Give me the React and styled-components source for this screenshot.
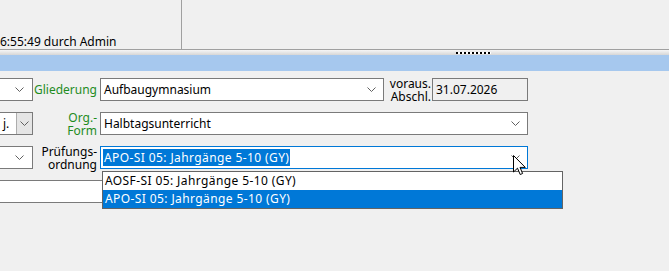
import React from "react";
import styled, { createGlobalStyle } from "styled-components";

const GlobalStyle = createGlobalStyle`
  html, body {
    margin: 0;
    padding: 0;
    background: #f0f0f0;
  }
  body {
    font-family: "Noto Sans", "Open Sans", sans-serif;
    font-size: 12px;
    color: #000;
    overflow: hidden;
  }
`;

const Page = styled.div`
  position: relative;
  width: 669px;
  height: 271px;
  overflow: hidden;
  background: #f0f0f0;
`;

const TopPanel = styled.div`
  display: flex;
  height: 49px;
  border-bottom: 1px solid #a0a0a0;
`;

const StatusCell = styled.div`
  width: 181px;
  border-right: 1px solid #a0a0a0;
  display: flex;
  align-items: flex-end;
  line-height: 15px;
  white-space: nowrap;
  overflow: hidden;
`;

const Splitter = styled.div`
  height: 5px;
  display: flex;
  align-items: center;
  padding-left: 456px;
  background: linear-gradient(#f6f6f6, #d6d6d6);
`;

const Grip = styled.div`
  width: 35px;
  height: 2px;
  margin-top: 1px;
  background: repeating-linear-gradient(
    to right,
    #000 0 2px,
    #fff 2px 4px
  );
`;

const Band = styled.div`
  height: 16px;
  background: #a6c8ee;
`;

const Form = styled.div`
  display: flex;
  flex-direction: column;
  gap: 11px;
  padding-top: 7px;
`;

const Row = styled.div`
  display: flex;
  align-items: center;
  height: 23px;
`;

const Box = styled.div`
  box-sizing: border-box;
  height: 23px;
  width: ${({ $w }) => $w}px;
  display: flex;
  align-items: center;
  justify-content: space-between;
  padding: 0 0 0 3px;
  background: ${({ $bg }) => $bg || "#fff"};
  border: 1px solid ${({ $focus }) => ($focus ? "#0078d7" : "#7a7a7a")};
  ${({ $open }) => ($open ? "border-left: none;" : "")}
  white-space: nowrap;
  overflow: hidden;
`;

const Chevron = styled.svg`
  flex: none;
  width: 9px;
  height: 5px;
  margin-right: ${({ $mr }) => $mr ?? 8}px;
`;

const SideButton = styled.div`
  box-sizing: border-box;
  width: 16px;
  height: 21px;
  display: flex;
  align-items: center;
  justify-content: center;
  background: #e5e5e5;
  border-left: 1px solid #adadad;
`;

const Label = styled.div`
  box-sizing: border-box;
  width: ${({ $w }) => $w || 67}px;
  padding-right: ${({ $pr }) => $pr ?? 3}px;
  text-align: right;
  line-height: 13px;
  color: ${({ $green }) => ($green ? "#1e8c1e" : "#000")};
  white-space: nowrap;
`;

const Selected = styled.span`
  background: #0078d7;
  color: #fff;
  line-height: 17px;
  letter-spacing: 0.4px;
  margin-left: -1px;
  padding: 0 1px;
`;

const DropList = styled.div`
  position: absolute;
  left: 102px;
  top: 171px;
  width: 461px;
  box-sizing: border-box;
  border: 1px solid #646464;
  background: #fff;
`;

const Item = styled.div`
  height: 18px;
  line-height: 18px;
  padding-left: 2px;
  letter-spacing: 0.4px;
  white-space: nowrap;
  background: ${({ $active }) => ($active ? "#0078d7" : "#fff")};
  color: ${({ $active }) => ($active ? "#fff" : "#000")};
`;

const Cursor = styled.svg`
  position: absolute;
  left: 513px;
  top: 155px;
  width: 13px;
  height: 21px;
`;

const Down = ({ mr }) => (
  <Chevron $mr={mr} viewBox="0 0 9 5">
    <polyline
      points="0.5,0.5 4.5,4.5 8.5,0.5"
      fill="none"
      stroke="#606060"
      strokeWidth="1"
    />
  </Chevron>
);

export default function App() {
  return (
    <Page>
      <GlobalStyle />
      <TopPanel>
        <StatusCell>6:55:49 durch Admin</StatusCell>
      </TopPanel>
      <Splitter>
        <Grip />
      </Splitter>
      <Band />
      <Form>
        <Row>
          <Box $w={33} $open>
            <span />
            <Down />
          </Box>
          <Label $green>Gliederung</Label>
          <Box $w={284}>
            <span>Aufbaugymnasium</span>
            <Down mr={7} />
          </Box>
          <Label $w={48} $pr={1}>
            voraus.
            <br />
            Abschl.
          </Label>
          <Box $w={96} $bg="#f0f0f0">
            <span>31.07.2026</span>
          </Box>
        </Row>
        <Row>
          <Box $w={33} $open>
            <span>j.</span>
            <SideButton>
              <Down mr={0} />
            </SideButton>
          </Box>
          <Label $green>
            Org.-
            <br />
            Form
          </Label>
          <Box $w={428}>
            <span>Halbtagsunterricht</span>
            <Down mr={7} />
          </Box>
        </Row>
        <Row>
          <Box $w={33} $open>
            <span />
            <Down />
          </Box>
          <Label>
            Prüfungs-
            <br />
            ordnung
          </Label>
          <Box $w={428} $focus>
            <Selected>APO-SI 05: Jahrgänge 5-10 (GY)</Selected>
            <Down mr={7} />
          </Box>
        </Row>
        <Row>
          <Box $w={528} $open />
        </Row>
      </Form>
      <DropList>
        <Item>AOSF-SI 05: Jahrgänge 5-10 (GY)</Item>
        <Item $active>APO-SI 05: Jahrgänge 5-10 (GY)</Item>
      </DropList>
      <Cursor viewBox="0 0 13 21">
        <path
          d="M0.5 0.5 L0.5 17 L4.5 13.2 L7.2 19.5 L9.6 18.5 L7 12.4 L12.3 12.4 Z"
          fill="#fff"
          stroke="#000"
          strokeWidth="1"
          strokeLinejoin="miter"
        />
      </Cursor>
    </Page>
  );
}
